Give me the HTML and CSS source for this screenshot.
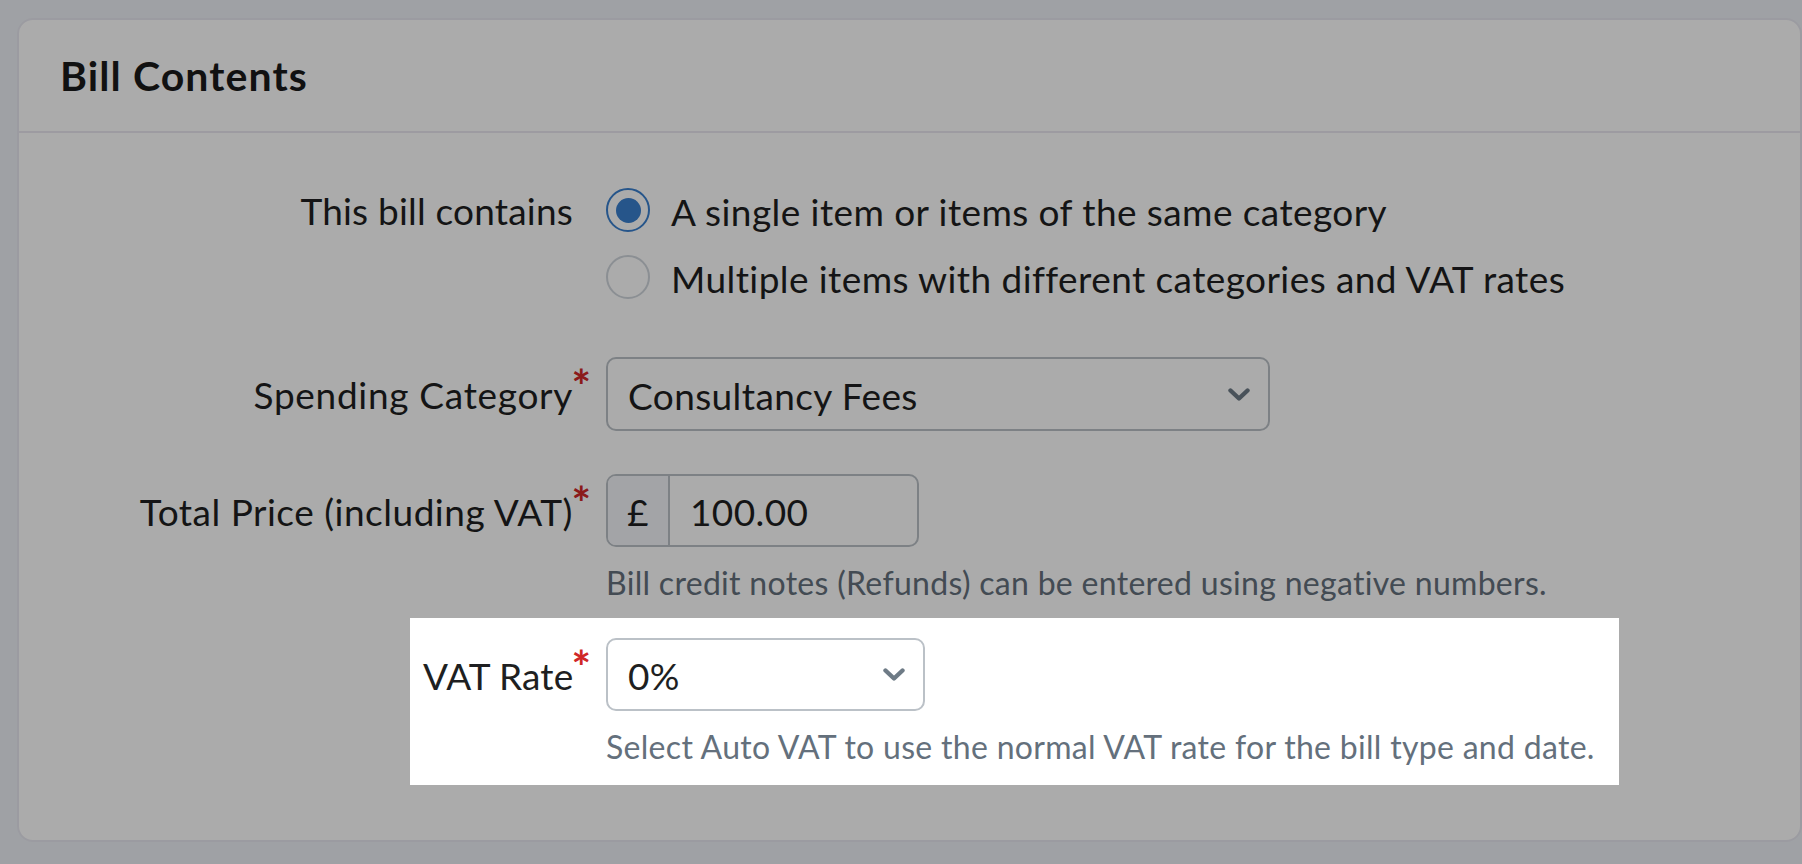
FILE: index.html
```html
<!DOCTYPE html>
<html lang="en">
<head>
<meta charset="utf-8">
<title>Bill Contents</title>
<link rel="stylesheet" href="styles.css">
</head>
<body>
<div class="card">
  <div class="card-header">
    <h2 class="card-title">Bill Contents</h2>
  </div>
  <div class="card-body">
    <div class="row row-radio">
      <div class="label label-plain">This bill contains</div>
      <div class="control">
        <label class="radio"><span class="radio-dot checked"></span><span class="radio-text">A single item or items of the same category</span></label>
        <label class="radio"><span class="radio-dot"></span><span class="radio-text">Multiple items with different categories and VAT rates</span></label>
      </div>
    </div>

    <div class="row row-category">
      <div class="label label-select">Spending Category<span class="ast">*</span></div>
      <div class="control">
        <div class="select select-wide">
          <span class="select-value">Consultancy Fees</span>
          <svg class="chevron" viewBox="0 0 22 13" width="22" height="13"><path d="M2.5 2.5 L11 10.5 L19.5 2.5" fill="none" stroke-width="4.4" stroke-linecap="round" stroke-linejoin="round"/></svg>
        </div>
      </div>
    </div>

    <div class="row row-price">
      <div class="label label-input">Total Price (including VAT)<span class="ast">*</span></div>
      <div class="control">
        <div class="input-group">
          <span class="prefix">£</span>
          <span class="input-value">100.00</span>
        </div>
        <p class="help">Bill credit notes (Refunds) can be entered using negative numbers.</p>
      </div>
    </div>

    <div class="row row-vat spotlight">
      <div class="label label-input label-vat">VAT Rate<span class="ast">*</span></div>
      <div class="control control-vat">
        <div class="select select-narrow">
          <span class="select-value">0%</span>
          <svg class="chevron" viewBox="0 0 22 13" width="22" height="13"><path d="M2.5 2.5 L11 10.5 L19.5 2.5" fill="none" stroke-width="4.4" stroke-linecap="round" stroke-linejoin="round"/></svg>
        </div>
        <p class="help">Select Auto VAT to use the normal VAT rate for the bill type and date.</p>
      </div>
    </div>
  </div>
</div>
</body>
</html>
```

FILE: styles.css
```css
* { box-sizing: border-box; }

html, body {
  margin: 0;
  padding: 0;
}

body {
  width: 1802px;
  height: 864px;
  overflow: hidden;
  background: #edf1f7;
  font-family: "Lato", "Liberation Sans", sans-serif;
  color: #1e1f21;
}

.card {
  margin: 18px 0 0 17px;
  width: 1785px;
  height: 824px;
  background: #ffffff;
  border: 2px solid #e8e8f0;
  border-radius: 16px;
}

.card-header {
  padding: 31px 38px 30px 41px;
  border-bottom: 2px solid #eae8f0;
}

.card-title {
  margin: 0;
  font-size: 41px;
  line-height: 50px;
  font-weight: 700;
  letter-spacing: 1.1px;
  color: #1a1a1a;
}

.card-body {
  padding-top: 55px;
}

.row {
  display: flex;
  align-items: flex-start;
  column-gap: 33px;
}

.label {
  position: relative;
  flex: none;
  width: 554px;
  text-align: right;
  white-space: nowrap;
  font-size: 37px;
  letter-spacing: 0.5px;
  line-height: 46px;
}

.label-plain { letter-spacing: 0.2px; }
.label-select { line-height: 76px; letter-spacing: 0.7px; }
.label-input { line-height: 75px; }

.ast {
  position: absolute;
  right: -18px;
  top: 6px;
  font-size: 46px;
  line-height: 46px;
  font-weight: 700;
  letter-spacing: 0;
  color: #d02727;
}

.control {
  flex: none;
  width: 1000px;
}

/* radios */
.row-radio .control {
  display: flex;
  flex-direction: column;
  row-gap: 23px;
}

.radio {
  display: flex;
  align-items: center;
  column-gap: 21px;
  height: 44px;
  font-size: 37px;
  letter-spacing: 0.42px;
}

.radio-text {
  padding-top: 3px;
}

.radio-dot {
  flex: none;
  width: 44px;
  height: 44px;
  border-radius: 50%;
  border: 2px solid #cfd5dc;
  background: #ffffff;
  display: flex;
  align-items: center;
  justify-content: center;
}

.radio-dot.checked {
  border-color: #397fce;
}

.radio-dot.checked::after {
  content: "";
  width: 25px;
  height: 25px;
  border-radius: 50%;
  background: #397fce;
}

/* rows spacing */
.row-category { margin-top: 58px; }
.row-price { margin-top: 41px; }

/* select */
.select {
  display: flex;
  align-items: center;
  justify-content: space-between;
  height: 74px;
  padding: 0 18px 0 20px;
  border: 2px solid #bbc1c7;
  border-radius: 10px;
  background: #ffffff;
  font-size: 37px;
  letter-spacing: 0.4px;
}

.select-value {
  padding-top: 2px;
}

.select-wide { width: 664px; }
.select-narrow { width: 319px; height: 73px; }

.chevron {
  flex: none;
  stroke: #6e7b86;
}

/* input group */
.input-group {
  display: flex;
  width: 313px;
  height: 73px;
  border: 2px solid #bbc1c7;
  border-radius: 10px;
  overflow: hidden;
  font-size: 37px;
  letter-spacing: 0.4px;
}

.prefix {
  flex: none;
  width: 62px;
  display: flex;
  align-items: center;
  justify-content: center;
  padding-top: 2px;
  background: #f3f5f9;
  border-right: 2px solid #bbc1c7;
}

.input-value {
  display: flex;
  align-items: center;
  padding: 2px 0 0 20px;
}

.help {
  margin: 16px 0 0;
  font-size: 32px;
  line-height: 40px;
  letter-spacing: 0.3px;
  color: #64707c;
}

/* highlighted VAT row (tour spotlight) */
.spotlight {
  position: relative;
  z-index: 1;
  width: fit-content;
  margin-top: 15px;
  margin-left: 391px;
  padding: 20px 13px 18px;
}

.spotlight::before {
  content: "";
  position: absolute;
  inset: 0;
  z-index: -1;
  background: #ffffff;
  box-shadow: 0 0 0 4000px rgba(0, 0, 0, 0.329);
}

.label-vat { width: 150px; letter-spacing: 0.1px; }
```
